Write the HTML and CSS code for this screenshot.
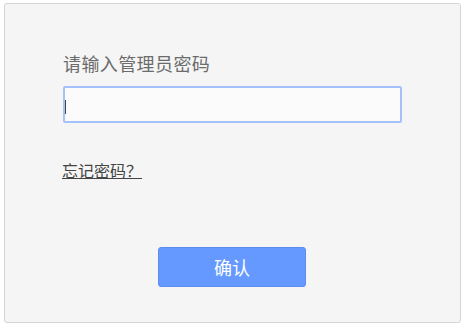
FILE: index.html
```html
<!DOCTYPE html>
<html lang="zh-CN">
<head>
<meta charset="utf-8">
<title>登录</title>
<link rel="stylesheet" href="styles.css">
</head>
<body>
<div class="panel">
  <div class="form">
    <label class="label" for="pwd">请输入管理员密码</label>
    <div class="input"><span class="caret"></span></div>
    <a class="forgot" href="#">忘记密码？</a>
  </div>
  <div class="actions">
    <button class="btn" type="button">确认</button>
  </div>
</div>
</body>
</html>
```
FILE: styles.css
```css
html, body {
  margin: 0;
  padding: 0;
  background: #ffffff;
}
body {
  font-family: "Noto Sans CJK SC", "Liberation Sans", sans-serif;
}
.panel {
  box-sizing: border-box;
  margin: 3px 0 0 4px;
  width: 457px;
  height: 320px;
  background: #f5f5f5;
  border: 1px solid #d4d4d4;
  border-radius: 3px;
  padding: 0 58px;
  display: flex;
  flex-direction: column;
}
.form {
  display: flex;
  flex-direction: column;
  align-items: flex-start;
  padding-top: 50px;
}
.label {
  font-size: 18px;
  line-height: 18px;
  color: #6b6b6b;
  letter-spacing: 0.4px;
}
.input {
  box-sizing: border-box;
  margin-top: 14px;
  width: 339px;
  height: 37px;
  background: #fbfbfb;
  border: 2px solid #a4c1fb;
  border-radius: 2px;
  display: flex;
  align-items: center;
}
.caret {
  width: 1px;
  height: 14px;
  background: #444;
  margin-top: 4px;
}
.forgot {
  margin-top: 38px;
  margin-left: -1px;
  font-size: 16px;
  line-height: 18px;
  color: #444444;
  text-decoration: underline;
}
.actions {
  display: flex;
  justify-content: center;
  padding-top: 68px;
  padding-right: 1px;
}
.btn {
  box-sizing: border-box;
  width: 148px;
  height: 40px;
  background: #6699ff;
  border: 1px solid #5b8cf0;
  border-radius: 3px;
  color: #ffffff;
  font-family: "Noto Sans CJK SC", "Liberation Sans", sans-serif;
  font-size: 18px;
  padding: 0;
  cursor: pointer;
}
```
